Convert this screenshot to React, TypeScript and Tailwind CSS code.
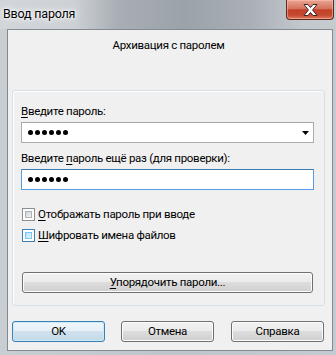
import React from 'react';

const font = "font-['Roboto','Liberation_Sans',sans-serif]";

const Dots: React.FC = () => (
  <div className="flex gap-[2px] items-center">
    {[0, 1, 2, 3, 4, 5].map(i => (
      <span key={i} className="w-[5px] h-[5px] rounded-full bg-black" />
    ))}
  </div>
);

const Btn: React.FC<{ children: React.ReactNode; primary?: boolean; className?: string }> = ({ children, primary, className }) => (
  <div
    className={
      'h-[21px] rounded-[3px] border flex items-center justify-center text-black ' +
      (primary
        ? 'border-[#3c7fb1] shadow-[inset_0_0_0_1px_#c7ebfd] bg-[linear-gradient(#f0f7fb_0%,#e6f0f6_45%,#d0e2ee_50%,#c4d8e6_100%)] '
        : 'border-[#707070] shadow-[inset_0_0_0_1px_#fcfcfc] bg-[linear-gradient(#f2f2f2_0%,#ebebeb_45%,#dddddd_50%,#cfcfcf_100%)] ') +
      (className || '')
    }
  >
    {children}
  </div>
);

const Check: React.FC<{ hover?: boolean }> = ({ hover }) => (
  <div
    className={
      'w-[13px] h-[13px] border p-[2px] bg-white ' + (hover ? 'border-[#3c7fb1]' : 'border-[#8e8f8f]')
    }
  >
    <div
      className={
        'w-full h-full border ' +
        (hover
          ? 'border-[#79c6f9] bg-[linear-gradient(135deg,#b1dffd,#e9f7fe)]'
          : 'border-[#aeb3b9] bg-[linear-gradient(135deg,#cbcfd5,#f6f6f6)]')
      }
    />
  </div>
);

export default function App() {
  return (
    <div
      className={
        'w-[336px] h-[355px] overflow-hidden text-[11.5px] leading-[15px] tracking-[-0.3px] text-black bg-[linear-gradient(90deg,#c9ced3_0%,#bfc5cb_50%,#c4cad0_100%)] ' +
        font
      }
    >
      {/* title bar */}
      <div className="h-[29px] flex items-start bg-[linear-gradient(90deg,#d2d6da_0%,#cdd1d5_22%,#a8aeb4_35%,#9ba2a9_55%,#aab0b6_75%,#c3c8cd_90%,#c6cbd0_100%)]">
        <div className="pl-[3px] pt-[6px] text-[12.5px] leading-[16px] tracking-[-0.2px] text-black [text-shadow:0_0_8px_#ffffff,0_0_4px_#ffffff,0_0_2px_#ffffff]">
          Ввод пароля
        </div>
        <div className="flex-1" />
        <div className="mr-[2px] w-[48px] h-[20px] rounded-b-[4px] border border-t-0 border-[#5b2a22] shadow-[inset_0_0_0_1px_rgba(255,200,180,0.5)] bg-[linear-gradient(#e9a593_0%,#d5735c_45%,#c24128_52%,#c44a30_80%,#e07c63_100%)] flex items-center justify-center">
          <svg width="17" height="14" viewBox="0 0 17 14">
            <path
              d="M2 1.5 L6 1.5 L8.5 4.6 L11 1.5 L15 1.5 L10.6 7 L15 12.5 L11 12.5 L8.5 9.4 L6 12.5 L2 12.5 L6.4 7 Z"
              fill="#ffffff"
              stroke="#3e2624"
              strokeWidth="1"
              strokeLinejoin="round"
            />
          </svg>
        </div>
      </div>

      {/* client */}
      <div className="ml-[7px] w-[326px] h-[322px] border border-[#838a91] bg-[#f0f0f0] flex flex-col">
        <div className="pt-[8px] h-[60px] text-center pr-[3px]">Архивация с паролем</div>

        <div className="ml-[4px] w-[313px] h-[216px] border border-[#d5dfe5] rounded-[3px] shadow-[inset_1px_1px_0_#ffffff] flex flex-col pl-[8px] pr-[10px]">
          <div className="pt-[13px] h-[31px]">
            <span className="underline underline-offset-2">В</span>ведите пароль:
          </div>
          <div className="h-[21px] border border-[#abadb3] border-t-[#a5a7ab] bg-white flex items-center pl-[6px] pr-[4px]">
            <Dots />
            <div className="flex-1" />
            <svg width="7" height="4" viewBox="0 0 7 4">
              <path d="M0 0 L7 0 L3.5 4 Z" fill="#000" />
            </svg>
          </div>
          <div className="pt-[8px] h-[26px]">
            Введите <span className="underline underline-offset-2">п</span>ароль ещё раз (для проверки):
          </div>
          <div className="h-[21px] border border-[#569de5] border-t-[#3d7bad] bg-white flex items-center pl-[6px]">
            <Dots />
          </div>

          <div className="mt-[18px] flex items-center gap-[3px] h-[13px] pl-[1px]">
            <Check />
            <span>
              <span className="underline underline-offset-2">О</span>тображать пароль при вводе
            </span>
          </div>
          <div className="mt-[8px] flex items-center gap-[3px] h-[13px] pl-[1px]">
            <Check hover />
            <span>
              <span className="underline underline-offset-2">Ш</span>ифровать имена файлов
            </span>
          </div>

          <Btn className="mt-[30px] ml-[1px] w-[291px]">
            <span>
              <span className="underline underline-offset-2">У</span>порядочить пароли...
            </span>
          </Btn>
        </div>

        <div className="mt-[15px] ml-[4px] flex">
          <Btn primary className="w-[93px]">OK</Btn>
          <Btn className="ml-[16px] w-[93px]">Отмена</Btn>
          <Btn className="ml-[17px] w-[93px]">Справка</Btn>
        </div>
      </div>
    </div>
  );
}
